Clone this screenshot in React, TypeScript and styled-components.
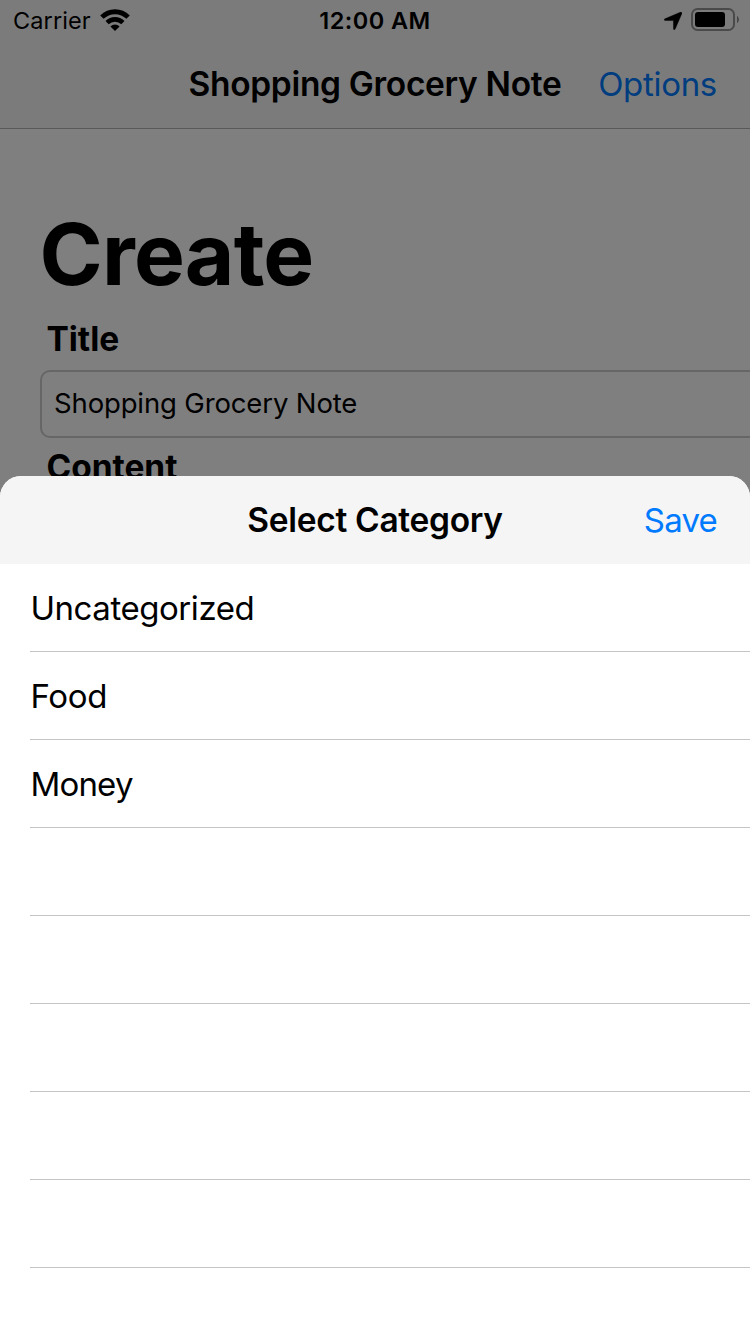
import React from "react";
import styled, { createGlobalStyle } from "styled-components";

const GlobalStyle = createGlobalStyle`
  * { box-sizing: border-box; }
  html, body { margin: 0; padding: 0; background: #fff; }
  body {
    font-family: Inter, "Liberation Sans", sans-serif;
    color: #000;
    overflow: hidden;
    -webkit-font-smoothing: antialiased;
  }
`;

const Screen = styled.div`
  position: relative;
  width: 750px;
  height: 1334px;
  overflow: hidden;
  background: #fff;
`;

const TopBar = styled.header`
  height: 129px;
  background: #f7f7f7;
  border-bottom: 1px solid #b2b2b2;
`;

const StatusBar = styled.div`
  height: 40px;
  display: grid;
  grid-template-columns: 1fr auto 1fr;
  align-items: center;
  padding: 0 11px;
`;

const StatusGroup = styled.div<{ $end?: boolean }>`
  display: flex;
  align-items: center;
  justify-content: ${(p) => (p.$end ? "flex-end" : "flex-start")};
  gap: 9px;
`;

const Carrier = styled.span`
  padding-left: 2px;
  font-size: 23.5px;
  line-height: 42px;
  letter-spacing: 0.1px;
`;

const Clock = styled.span`
  font-size: 23.5px;
  line-height: 42px;
  font-weight: 600;
  letter-spacing: 0.45px;
`;

const NavRow = styled.div`
  height: 88px;
  display: grid;
  grid-template-columns: 1fr auto 1fr;
  align-items: center;
  padding: 0 33px;
`;

const NavTitle = styled.h2`
  grid-column: 2;
  margin: 0;
  font-size: 33.5px;
  line-height: 40px;
  font-weight: 600;
  letter-spacing: -0.32px;
  white-space: nowrap;
`;

const NavButton = styled.button<{ $spacing: number }>`
  justify-self: end;
  padding: 0;
  border: 0;
  background: none;
  color: #007aff;
  font: inherit;
  font-size: 33px;
  line-height: 40px;
  letter-spacing: ${(p) => p.$spacing}px;
`;

const Form = styled.main`
  padding: 74px 0 0 40px;
`;

const Heading = styled.h1`
  margin: 0 0 0 -0.5px;
  font-size: 85.5px;
  line-height: 102px;
  font-weight: 700;
  letter-spacing: -0.8px;
`;

const Label = styled.label`
  display: block;
  padding-left: 6.5px;
  font-size: 33.5px;
  line-height: 40px;
  font-weight: 700;
  letter-spacing: -0.05px;
`;

const TitleLabel = styled(Label)`
  margin-top: 14px;
`;

const ContentLabel = styled(Label)`
  margin-top: 9px;
`;

const Field = styled.div`
  width: 760px;
  height: 68px;
  margin-top: 11px;
  padding: 0 12px 2px;
  display: flex;
  align-items: center;
  border: 2px solid #cccccc;
  border-radius: 10px;
  font-size: 27.5px;
  letter-spacing: -0.14px;
`;

const Dim = styled.div`
  position: absolute;
  inset: 0;
  background: rgba(0, 0, 0, 0.5);
  display: flex;
  flex-direction: column;
  justify-content: flex-end;
`;

const Sheet = styled.section`
  height: 858px;
  border-radius: 21px 21px 0 0;
  overflow: hidden;
  background: #fff;
`;

const SheetHeader = styled.div`
  background: #f5f5f5;
`;

const List = styled.ul`
  margin: 0;
  padding: 0 0 0 30px;
  list-style: none;
`;

const Row = styled.li<{ $spacing?: number }>`
  height: 88px;
  display: flex;
  align-items: center;
  padding-left: 0.4px;
  border-bottom: 1px solid #c6c6c8;
  font-size: 33px;
  line-height: 40px;
  letter-spacing: ${(p) => p.$spacing ?? 0}px;
`;

const StatusIcon = styled.svg<{ $lift?: number }>`
  display: block;
  flex: none;
  margin-bottom: ${(p) => p.$lift ?? 0}px;
`;

const WifiIcon = () => (
  <StatusIcon $lift={2} width="30" height="22" viewBox="0 0 30 22">
    <path d="M15 22 L10.4 17.4 A6.6 6.6 0 0 1 19.6 17.4 Z" fill="#000" />
    <path d="M7.1 13.6 A11.4 11.4 0 0 1 22.9 13.6" fill="none" stroke="#000" strokeWidth="4.6" />
    <path d="M1.9 8.1 A18.7 18.7 0 0 1 28.1 8.1" fill="none" stroke="#000" strokeWidth="4.8" />
  </StatusIcon>
);

const LocationIcon = () => (
  <StatusIcon width="18" height="18" viewBox="0 0 18 18">
    <path
      d="M17.6 0.4 C18.1 0.8 18 1.3 17.7 1.9 L11.2 17 C10.8 18 9.6 18.1 9.5 17 L9.4 9.1 C9.4 8.7 9.3 8.6 8.9 8.6 L1.1 8.5 C0 8.4 -0.1 7.2 0.9 6.8 L16.2 0.3 C16.8 0 17.3 0 17.6 0.4 Z"
      fill="#000"
      stroke="#000"
      strokeWidth="0.4"
    />
  </StatusIcon>
);

const BatteryIcon = () => (
  <StatusIcon $lift={3} width="48" height="23" viewBox="0 0 48 23">
    <rect x="1" y="1" width="42" height="21" rx="5.5" fill="none" stroke="#000" strokeOpacity="0.4" strokeWidth="2" />
    <rect x="4" y="4" width="30" height="15" rx="3" fill="#000" />
    <path d="M46 8 C48.5 9.2 48.5 13.8 46 15 Z" fill="#000" fillOpacity="0.45" />
  </StatusIcon>
);

const categories = [
  { name: "Uncategorized", spacing: -0.44 },
  { name: "Food", spacing: -0.3 },
  { name: "Money", spacing: -0.8 },
  { name: "" },
  { name: "" },
  { name: "" },
  { name: "" },
  { name: "" },
];

export default function App() {
  return (
    <>
      <GlobalStyle />
      <Screen>
        <TopBar>
          <StatusBar>
            <StatusGroup>
              <Carrier>Carrier</Carrier>
              <WifiIcon />
            </StatusGroup>
            <Clock>12:00 AM</Clock>
            <StatusGroup $end>
              <LocationIcon />
              <BatteryIcon />
            </StatusGroup>
          </StatusBar>
          <NavRow>
            <NavTitle>Shopping Grocery Note</NavTitle>
            <NavButton $spacing={-0.3}>Options</NavButton>
          </NavRow>
        </TopBar>
        <Form>
          <Heading>Create</Heading>
          <TitleLabel>Title</TitleLabel>
          <Field>Shopping Grocery Note</Field>
          <ContentLabel>Content</ContentLabel>
        </Form>
        <Dim>
          <Sheet>
            <SheetHeader>
              <NavRow>
                <NavTitle>Select Category</NavTitle>
                <NavButton $spacing={-0.8}>Save</NavButton>
              </NavRow>
            </SheetHeader>
            <List>
              {categories.map((c, i) => (
                <Row key={i} $spacing={c.spacing}>{c.name}</Row>
              ))}
            </List>
          </Sheet>
        </Dim>
      </Screen>
    </>
  );
}
